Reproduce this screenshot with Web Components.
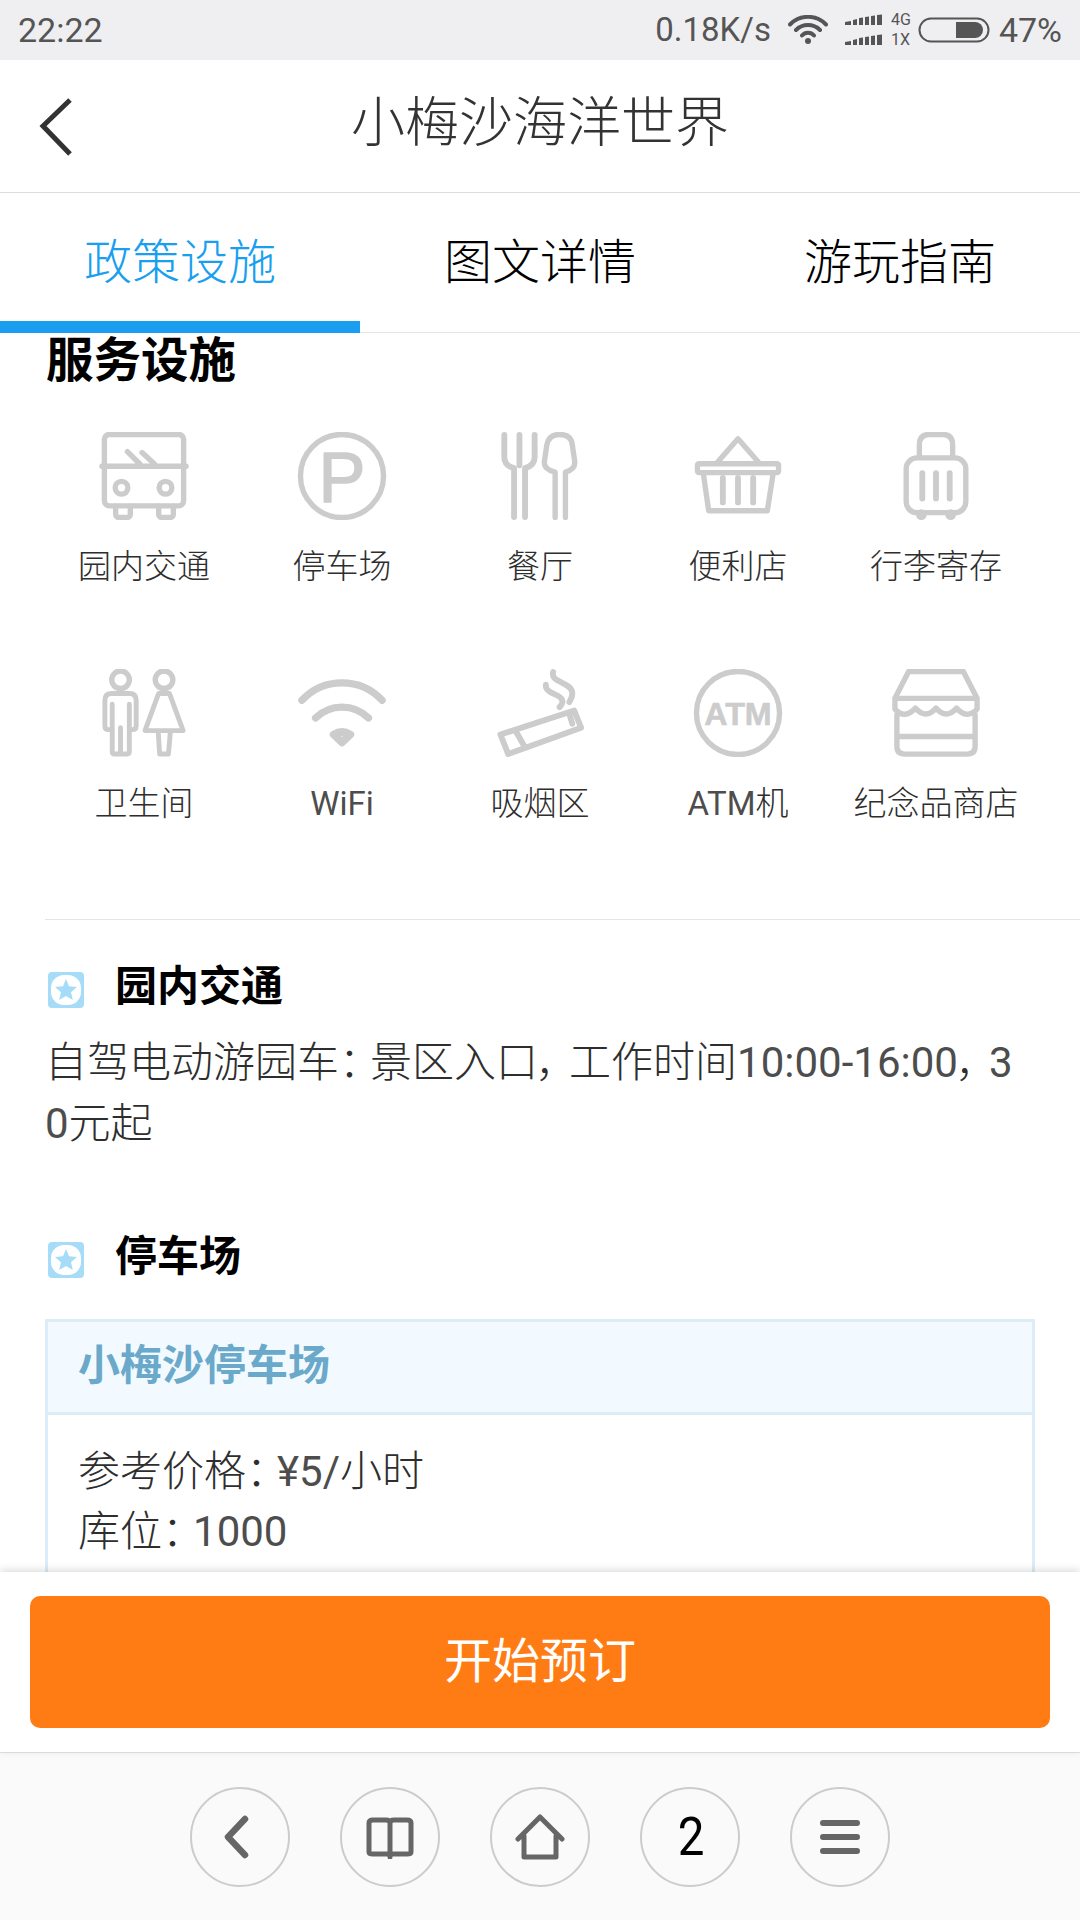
<!DOCTYPE html>
<html lang="zh">
<head>
<meta charset="utf-8">
<title>小梅沙海洋世界</title>
<style>
html, body { margin: 0; padding: 0; background: #fff; }
body { font-family: Roboto, "Noto Sans CJK SC", sans-serif; color: #333; }
.c { font-feature-settings: "palt"; margin-right: 10px; }
.d { font-feature-settings: "palt"; margin-right: 10px; }
.n { font-weight: 400; color: #4d4d4d; }
</style>
</head>
<body>
<app-screen>
  <status-bar slot="top"></status-bar>
  <title-bar slot="top" title="小梅沙海洋世界"></title-bar>
  <tab-bar slot="top">
    <tab-item active>政策设施</tab-item>
    <tab-item>图文详情</tab-item>
    <tab-item>游玩指南</tab-item>
  </tab-bar>

  <facility-panel heading="服务设施">
    <facility-item icon="bus">园内交通</facility-item>
    <facility-item icon="parking">停车场</facility-item>
    <facility-item icon="food">餐厅</facility-item>
    <facility-item icon="basket">便利店</facility-item>
    <facility-item icon="luggage">行李寄存</facility-item>
    <facility-item icon="toilet">卫生间</facility-item>
    <facility-item icon="wifi"><span class="n">WiFi</span></facility-item>
    <facility-item icon="smoke">吸烟区</facility-item>
    <facility-item icon="atm"><span class="n">ATM</span>机</facility-item>
    <facility-item icon="store">纪念品商店</facility-item>
  </facility-panel>

  <info-section heading="园内交通" style="--gap-top:37px">
    <p>自驾电动游园车<span class="c">：</span>景区入口<span class="d">，</span>工作时间<span class="n">10:00-16:00</span><span class="d">，</span><span class="n">3</span><br><span class="n">0</span>元起</p>
  </info-section>
  <info-section heading="停车场" style="--gap-top:73px">
    <park-card heading="小梅沙停车场">
      <div>参考价格<span class="c">：</span><span class="n">¥5/</span>小时</div>
      <div>库位<span class="c">：</span><span class="n">1000</span></div>
    </park-card>
  </info-section>

  <book-footer slot="bottom">开始预订</book-footer>
  <browser-nav slot="bottom"></browser-nav>
</app-screen>

<script>
const ICONS = {
  bus: `<rect x="4.500" y="2.500" width="81" height="73" rx="5"/><path d="M2 35H88M28 20L41 33M43 21L56 33"/><circle cx="22" cy="57" r="6.500"/><circle cx="67" cy="57" r="6.500"/><path d="M16 76v8a3.500 3.500 0 0 0 3.500 3.500h8a3.500 3.500 0 0 0 3.500-3.500v-8M60 76v8a3.500 3.500 0 0 0 3.500 3.500h8a3.500 3.500 0 0 0 3.500-3.500v-8"/>`,
  parking: `<circle cx="45" cy="45" r="42.500"/><text x="45" y="72" text-anchor="middle" font-family="Liberation Sans" font-size="72" fill="#ccc" stroke="#ccc" stroke-width="1.500">P</text>`,
  food: `<path stroke-width="6" d="M8.500 3V26Q8.500 34 18.500 37V87M39.500 3V26Q39.500 34 29.700 37V87M24 3V34"/><path stroke-width="5.500" d="M60.500 87.500V41Q48.500 38 49.500 30L52 13Q54 2.500 65 2.500Q77 2.500 78 13L80.500 30Q81.500 38 71 41V87.500"/>`,
  basket: `<rect x="3.500" y="32.500" width="83" height="9" rx="1.500"/><path d="M9.500 42L15 80.500H75L81 42M24 31L45 7L66 31"/><path stroke-width="6" d="M29.500 47V72M45 47V72M60.500 47V72"/>`,
  luggage: `<rect x="14.500" y="26.500" width="61" height="56" rx="11"/><path d="M28 26V13Q28 2.500 38 2.500H52Q62 2.500 62 13V26"/><path stroke-width="6" d="M31 42V68M45 42V68M59 42V68"/><circle cx="30" cy="84.500" r="5.500" fill="#ccc" stroke="none"/><circle cx="60" cy="84.500" r="5.500" fill="#ccc" stroke="none"/>`,
  toilet: `<circle cx="21" cy="11" r="9"/><circle cx="65.500" cy="11" r="9"/><path stroke-width="5" d="M12.500 36V84Q12.500 87 15 87H27Q30 87 30 84V36M21 60V87M12 62H8.500Q5 62 5 58V32Q5 25 12 25H30Q37 25 37 32V58Q37 62 33.500 62H30"/><path stroke-width="5" d="M60 25H71L85 63H46ZM59.500 64L61 87H70L72 64"/>`,
  wifi: `<path stroke-width="7.500" d="M4 32A56 56 0 0 1 86 32M18 50A38.500 38.500 0 0 1 72 50"/><path stroke-width="8" d="M36.500 67Q45 62 53.500 67L45 75Z"/>`,
  smoke: `<path stroke-width="6" d="M4.500 67L80 42.500L87 60L12.500 87ZM21 65L29 79M75 46L78 56"/><path stroke-width="6" d="M58.500 3C55 14 77 13 78 24C78.500 29 76 32 75 34M51 16C50 26 67 25 68 33C68 36 66 38 65 39"/>`,
  atm: `<circle cx="45" cy="45" r="42.500"/><text x="45" y="57" text-anchor="middle" font-family="Liberation Sans" font-weight="700" font-size="33" fill="#ccc" stroke="#ccc" stroke-width=".6">ATM</text>`,
  store: `<path d="M3 30L17 2.500H73L87 30M3 30H87M3 30V41Q13 52 24 40Q34.500 52 45 40Q55.500 52 66 40Q76.500 52 87 41V30M5 47V79Q5 87 13 87H77Q85 87 85 79V47M5 69H85"/>`
};

class AppScreen extends HTMLElement {
  constructor() {
    super();
    this.attachShadow({ mode: 'open' }).innerHTML = `
      <style>
        :host { display: flex; flex-direction: column; width: 1080px; height: 1920px; overflow: hidden; background: #fff; }
        .body { flex: 1; min-height: 0; overflow: hidden; }
        .top, .bottom { flex: none; position: relative; }
      </style>
      <div class="top"><slot name="top"></slot></div>
      <div class="body"><slot></slot></div>
      <div class="bottom"><slot name="bottom"></slot></div>`;
  }
}

class StatusBar extends HTMLElement {
  constructor() {
    super();
    this.attachShadow({ mode: 'open' }).innerHTML = `
      <style>
        :host { display: flex; align-items: center; height: 60px; background: #efeff2; color: #555; font: 34px/60px Roboto, sans-serif; padding: 0 18px; box-sizing: border-box; }
        .time { flex: 1; }
        .right { display: flex; align-items: center; }
        .speed { margin-right: 17px; font-size: 33px; }
        .net { display: flex; flex-direction: column; font-size: 16px; line-height: 20px; margin: 0 7px 0 8px; }
        svg { display: block; }
        .pct { margin-left: 9px; }
      </style>
      <span class="time">22:22</span>
      <div class="right">
        <span class="speed">0.18K/s</span>
        <svg width="40" height="30" viewBox="0 0 40 30" fill="none" stroke="#555" stroke-width="4" stroke-linecap="round"><path d="M2 9.500A25 25 0 0 1 38 9.500M8 15A17 17 0 0 1 32 15M14 20.500A8 8 0 0 1 26 20.500"/><circle cx="20" cy="26" r="3" fill="#555" stroke="none"/></svg>
        <svg style="margin-left:17px" width="38" height="32" viewBox="0 0 38 32" fill="#555"><path d="M0 8L6 7V11H0ZM8 6L12 5V11H8ZM14 4L18 3.500V11H14ZM20 3L24 2.500V11H20ZM26 2L30 1.500V11H26ZM32 1L37 .5V11H32Z"/><path d="M0 28L6 27V31H0ZM8 26L12 25V31H8ZM14 24L18 23.500V31H14ZM20 23L24 22.500V31H20ZM26 22L30 21.500V31H26ZM32 21L37 20.500V31H32Z"/></svg>
        <div class="net"><span>4G</span><span>1X</span></div>
        <svg width="72" height="26" viewBox="0 0 72 26"><rect x="1.500" y="1.500" width="69" height="23" rx="11.500" fill="none" stroke="#555" stroke-width="2"/><path d="M38 5H57A8 8 0 0 1 65 13A8 8 0 0 1 57 21H38Z" fill="#555"/></svg>
        <span class="pct">47%</span>
      </div>`;
  }
}

class TitleBar extends HTMLElement {
  constructor() {
    super();
    this.attachShadow({ mode: 'open' }).innerHTML = `
      <style>
        :host { display: flex; align-items: center; justify-content: center; position: relative; height: 133px; box-sizing: border-box; border-bottom: 1px solid #ddd; background: #fff; color: #333; font: 300 54px/130px Roboto, "Noto Sans CJK SC", sans-serif; }
        span { padding-bottom: 4px; }
        svg { position: absolute; left: 38px; top: 38px; }
      </style>
      <svg width="36" height="58" viewBox="0 0 36 58" fill="none" stroke="#333" stroke-width="5"><path d="M32 2L5 28L32 56" stroke-linejoin="miter"/></svg>
      <span>${this.getAttribute('title')}</span>`;
  }
}

class TabBar extends HTMLElement {
  constructor() {
    super();
    this.attachShadow({ mode: 'open' }).innerHTML = `
      <style>
        :host { display: grid; grid-template-columns: repeat(3, 1fr); height: 140px; box-sizing: border-box; border-bottom: 1px solid #e5e5e5; background: #fff; }
      </style>
      <slot></slot>`;
  }
}

class TabItem extends HTMLElement {
  constructor() {
    super();
    this.attachShadow({ mode: 'open' }).innerHTML = `
      <style>
        :host { display: block; text-align: center; height: 140px; box-sizing: border-box; padding-top: 40px; font: 300 48px/60px Roboto, "Noto Sans CJK SC", sans-serif; color: #000; }
        :host([active]) { color: #1a9ff0; border-bottom: 12px solid #1a9ff0; }
      </style>
      <slot></slot>`;
  }
}

class FacilityPanel extends HTMLElement {
  constructor() {
    super();
    this.attachShadow({ mode: 'open' }).innerHTML = `
      <style>
        :host { display: block; padding-bottom: 90px; border-bottom: 1px solid #e5e5e5; margin-left: 45px; }
        h2 { margin: 0 0 43px 1px; font: 700 47.500px/54px Roboto, "Noto Sans CJK SC", sans-serif; color: #000; padding: 1px 0; }
        .grid { display: grid; grid-template-columns: repeat(5, 198px); row-gap: 77px; }
      </style>
      <h2>${this.getAttribute('heading')}</h2>
      <div class="grid"><slot></slot></div>`;
  }
}

class FacilityItem extends HTMLElement {
  constructor() {
    super();
    const icon = ICONS[this.getAttribute('icon')] || '';
    this.attachShadow({ mode: 'open' }).innerHTML = `
      <style>
        :host { display: flex; flex-direction: column; align-items: center; height: 160px; font: 300 33px/50px Roboto, "Noto Sans CJK SC", sans-serif; color: #2e2e2e; }
        svg { display: block; margin-bottom: 22px; }
      </style>
      <svg width="90" height="90" viewBox="0 0 90 90" fill="none" stroke="#ccc" stroke-width="5.500" stroke-linecap="round" stroke-linejoin="round">${icon}</svg>
      <span><slot></slot></span>`;
  }
}

class InfoSection extends HTMLElement {
  constructor() {
    super();
    this.attachShadow({ mode: 'open' }).innerHTML = `
      <style>
        :host { display: block; padding: var(--gap-top) 45px 0 45px; font: 300 42px/61px Roboto, "Noto Sans CJK SC", sans-serif; color: #2e2e2e; }
        .head { display: flex; align-items: center; height: 60px; margin-bottom: 15px; }
        svg { display: block; margin: 5px 31px 0 3px; }
        h3 { margin: 0; font: 700 42px/60px Roboto, "Noto Sans CJK SC", sans-serif; color: #000; }
        ::slotted(p) { margin: 0; }
        ::slotted(park-card) { margin-top: 32px; }
      </style>
      <div class="head">
        <svg width="36" height="36" viewBox="0 0 36 36"><rect width="36" height="36" rx="4" fill="#a6dcf8"/><rect x="3" y="3" width="30" height="30" rx="13" fill="#fff"/><path d="M18 7L21 14.300L29 15L23 20.200L24.800 28L18 23.900L11.200 28L13 20.200L7 15L15 14.300Z" fill="#a6dcf8"/></svg>
        <h3>${this.getAttribute('heading')}</h3>
      </div>
      <slot></slot>`;
  }
}

class ParkCard extends HTMLElement {
  constructor() {
    super();
    this.attachShadow({ mode: 'open' }).innerHTML = `
      <style>
        :host { display: block; border: 3px solid #dcedf7; font: 300 42px/60px Roboto, "Noto Sans CJK SC", sans-serif; color: #2e2e2e; }
        .head { height: 90px; border-bottom: 3px solid #dcedf7; background: #f2f9ff; padding: 0 30px; font: 700 42px/88px Roboto, "Noto Sans CJK SC", sans-serif; color: #6aa9c9; }
        .body { padding: 27px 30px; }
      </style>
      <div class="head">${this.getAttribute('heading')}</div>
      <div class="body"><slot></slot></div>`;
  }
}

class BookFooter extends HTMLElement {
  constructor() {
    super();
    this.attachShadow({ mode: 'open' }).innerHTML = `
      <style>
        :host { display: block; padding: 24px 30px; background: #fff; box-shadow: 0 -2px 8px rgba(0,0,0,.14); position: relative; }
        button { display: block; width: 100%; height: 132px; border: 0; border-radius: 10px; background: #ff7c14; color: #fff; font: 400 48px/132px Roboto, "Noto Sans CJK SC", sans-serif; padding: 0; }
      </style>
      <button><slot></slot></button>`;
  }
}

class BrowserNav extends HTMLElement {
  constructor() {
    super();
    const btn = inner => `<div class="c">${inner}</div>`;
    const svg = (w, h, sw, body) => `<svg width="${w}" height="${h}" viewBox="0 0 ${w} ${h}" fill="none" stroke="#666" stroke-width="${sw}" stroke-linecap="round" stroke-linejoin="round">${body}</svg>`;
    this.attachShadow({ mode: 'open' }).innerHTML = `
      <style>
        :host { display: flex; justify-content: center; gap: 50px; height: 168px; box-sizing: border-box; padding-top: 34px; border-top: 1px solid #e2e2e2; background: #fafafa; }
        .c { width: 100px; height: 100px; box-sizing: border-box; border: 2px solid #ccc; border-radius: 50%; display: flex; align-items: center; justify-content: center; font: 400 54px/1 Roboto, sans-serif; color: #000; }
        .c svg { display: block; }
        .two { display: block; transform: scaleX(.88); padding-left: 2px; }
      </style>
      ${btn(svg(32, 44, 6.500, '<path d="M21 4L4 22L21 40"/>'))}
      ${btn(svg(48, 44, 5, '<path d="M24 8Q24 5 20 5H7Q3 5 3 8V37Q3 39 7 39H41Q45 39 45 37V8Q45 5 41 5H28Q24 5 24 8V42"/>'))}
      ${btn(svg(50, 46, 5, '<path d="M3 25L25 3L47 25M9 22V43H41V22"/>'))}
      ${btn('<span class="two">2</span>')}
      ${btn(svg(42, 36, 6, '<path d="M4 4H38M4 18H38M4 32H38"/>'))}`;
  }
}

customElements.define('app-screen', AppScreen);
customElements.define('status-bar', StatusBar);
customElements.define('title-bar', TitleBar);
customElements.define('tab-bar', TabBar);
customElements.define('tab-item', TabItem);
customElements.define('facility-panel', FacilityPanel);
customElements.define('facility-item', FacilityItem);
customElements.define('info-section', InfoSection);
customElements.define('park-card', ParkCard);
customElements.define('book-footer', BookFooter);
customElements.define('browser-nav', BrowserNav);
</script>
</body>
</html>
